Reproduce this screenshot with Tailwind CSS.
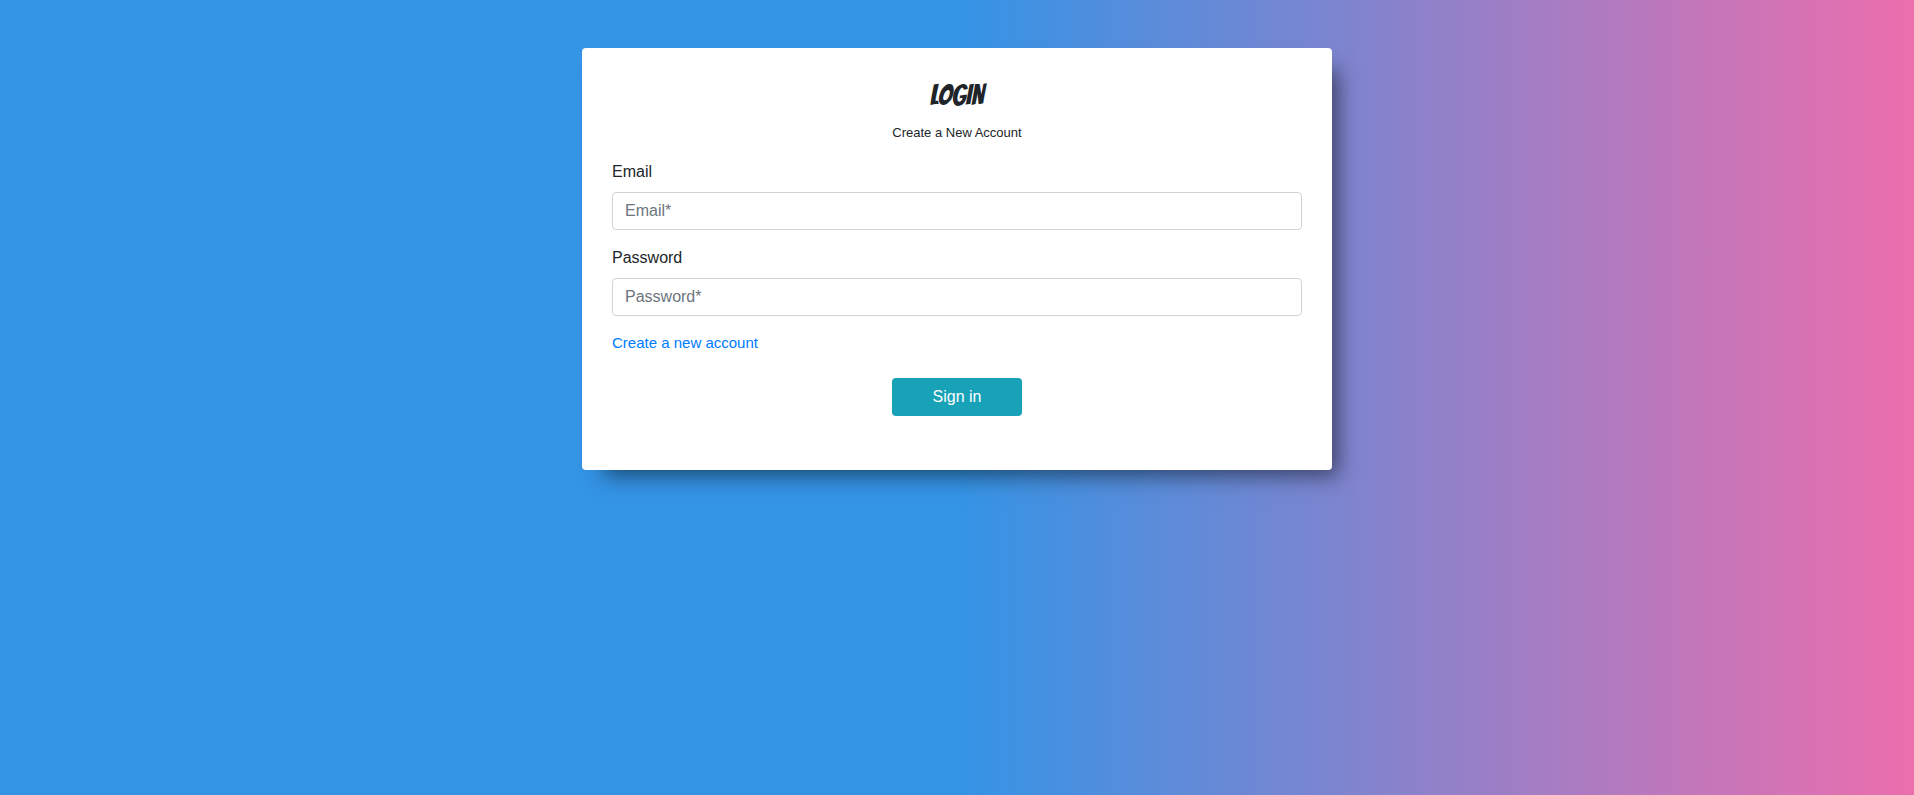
<!DOCTYPE html>
<html lang="en">
<head>
<meta charset="utf-8">
<meta name="viewport" content="width=device-width, initial-scale=1">
<title>Login</title>
<script src="https://cdn.jsdelivr.net/npm/@tailwindcss/browser@4"></script>
</head>
<body class="min-h-screen bg-[linear-gradient(90deg,#3494e6_50%,#ec6ead)] px-4 py-12 font-['Liberation_Sans',Arial,sans-serif] text-base text-[#212529]">
<main class="mx-auto w-full max-w-[750px] rounded bg-white px-[30px] pt-[29px] pb-[54px] shadow-[14px_14px_20px_-8px_rgba(0,0,0,0.5)]">
  <header class="text-center">
    <h1 class="font-['Bangers','Liberation_Sans_Narrow','Liberation_Sans',sans-serif] text-[28px] leading-9 font-medium">LOGIN</h1>
    <p class="mt-2 text-[13px] leading-6">Create a New Account</p>
  </header>
  <form class="mt-[15px]">
    <label for="email" class="block">Email</label>
    <input id="email" type="email" placeholder="Email*" class="mt-2 block h-[38px] w-full rounded border border-[#ced4da] bg-white px-3 placeholder:text-[#6c757d]">
    <label for="password" class="mt-4 block">Password</label>
    <input id="password" type="password" placeholder="Password*" class="mt-2 block h-[38px] w-full rounded border border-[#ced4da] bg-white px-3 placeholder:text-[#6c757d]">
    <a href="#" class="mt-[15px] block w-fit text-[15px] leading-6 text-[#007bff]">Create a new account</a>
    <button type="submit" class="mx-auto mt-[23px] block h-[38px] w-[130px] rounded bg-[#17a2b8] text-white">Sign in</button>
  </form>
</main>
</body>
</html>
